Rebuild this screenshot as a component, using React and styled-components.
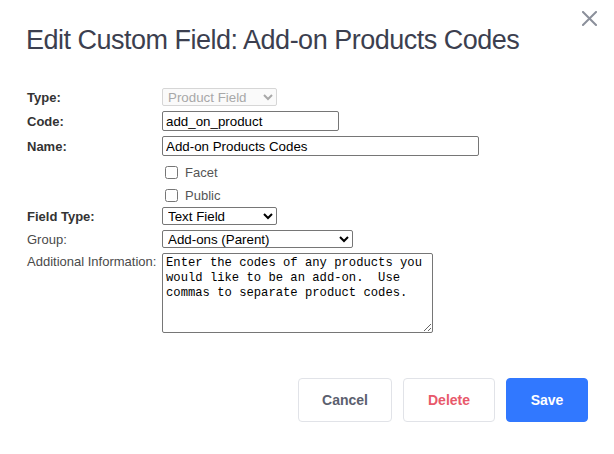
import styled, {createGlobalStyle} from "styled-components";

const GlobalStyle = createGlobalStyle`
  html, body {
    margin: 0;
    padding: 0;
    background: #ffffff;
  }
  body {
    font-family: "Liberation Sans", Arial, sans-serif;
  }
`;

const Modal = styled.div`
  width: 614px;
  height: 454px;
  box-sizing: border-box;
  padding: 0 26px 0 25px;
  background: #ffffff;
  display: flex;
  flex-direction: column;
`;

const Header = styled.div`
  display: flex;
  justify-content: space-between;
  align-items: flex-start;
  padding-top: 10px;
`;

const Title = styled.h2`
  margin: 14px 0 0 1px;
  font-family: "Liberation Sans", Arial, sans-serif;
  font-weight: 400;
  font-size: 27px;
  line-height: 32px;
  letter-spacing: -0.5px;
  color: #3c3f4f;
`;

const CloseButton = styled.button`
  border: none;
  background: transparent;
  padding: 0;
  margin-right: -10px;
  width: 17px;
  height: 17px;
  cursor: pointer;
  display: flex;
  align-items: center;
  justify-content: center;
`;

const Form = styled.form`
  display: grid;
  grid-template-columns: 135px auto;
  row-gap: 5px;
  align-items: center;
  margin: 32px 0 0 2px;
`;

const Label = styled.label`
  font-size: 13px;
  font-weight: ${(p) => (p.$bold ? 700 : 400)};
  color: ${(p) => (p.$bold ? "#333333" : "#4a4a4a")};
  align-self: ${(p) => (p.$top ? "start" : "center")};
  padding-top: ${(p) => (p.$top ? "1px" : "0")};
  white-space: nowrap;
`;

const Field = styled.div`
  display: flex;
  align-items: center;
`;

const TextInput = styled.input`
  box-sizing: border-box;
  width: ${(p) => p.$width}px;
  height: 20px;
  padding: 0 3px;
  border: 1px solid #767676;
  border-radius: 2px;
  font-family: "Liberation Sans", Arial, sans-serif;
  font-size: 13.33px;
  color: #000000;
  outline: none;
`;

const Select = styled.select`
  box-sizing: border-box;
  width: ${(p) => p.$width}px;
  height: 18px;
  padding: 0 0 0 1px;
  border: 1px solid ${(p) => (p.disabled ? "#d6d6d6" : "#767676")};
  border-radius: 2px;
  background: ${(p) => (p.disabled ? "#fafafa" : "#ffffff")};
  font-family: "Liberation Sans", Arial, sans-serif;
  font-size: 13.33px;
  color: ${(p) => (p.disabled ? "#a8a8a8" : "#000000")};
  opacity: 1;
`;

const CheckRow = styled.label`
  grid-column: 2;
  display: flex;
  align-items: center;
  gap: 7px;
  height: 18px;
  padding-left: 3px;
  margin-top: ${(p) => p.$mt || 0}px;
  margin-bottom: ${(p) => p.$mb || 0}px;
  font-size: 13px;
  color: #555555;
`;

const Checkbox = styled.input`
  margin: 0;
  width: 13px;
  height: 13px;
`;

const TextArea = styled.textarea`
  box-sizing: border-box;
  width: 271px;
  height: 80px;
  padding: 2px 3px;
  border: 1px solid #767676;
  border-radius: 2px;
  font-family: "Liberation Mono", "DejaVu Sans Mono", monospace;
  font-size: 12.2px;
  line-height: 15px;
  color: #000000;
  resize: both;
  outline: none;
`;

const Footer = styled.div`
  display: flex;
  justify-content: flex-end;
  gap: 11px;
  margin-top: 45px;
`;

const Button = styled.button`
  box-sizing: border-box;
  height: 44px;
  width: ${(p) => p.$width}px;
  border-radius: 4px;
  border: 1px solid ${(p) => (p.$primary ? "#3178ff" : "#e1e3e8")};
  background: ${(p) => (p.$primary ? "#3178ff" : "#ffffff")};
  color: ${(p) => p.$color};
  font-family: "Liberation Sans", Arial, sans-serif;
  font-weight: 700;
  font-size: 14px;
  cursor: pointer;
`;

export default function App() {
    return (
        <>
            <GlobalStyle/>
            <Modal>
                <Header>
                    <Title>Edit Custom Field: Add-on Products Codes</Title>
                    <CloseButton type='button' aria-label='Close'>
                        <svg width='15' height='15' viewBox='0 0 15 15'>
                            <path d='M1 1L14 14M14 1L1 14' stroke='#8b909b' strokeWidth='2' strokeLinecap='square'/>
                        </svg>
                    </CloseButton>
                </Header>

                <Form onSubmit={(e) => e.preventDefault()}>
                    <Label $bold>Type:</Label>
                    <Field>
                        <Select $width={115} disabled defaultValue='product'>
                            <option value='product'>Product Field</option>
                        </Select>
                    </Field>

                    <Label $bold>Code:</Label>
                    <Field>
                        <TextInput $width={177} type='text' defaultValue='add_on_product'/>
                    </Field>

                    <Label $bold>Name:</Label>
                    <Field>
                        <TextInput $width={317} type='text' defaultValue='Add-on Products Codes'/>
                    </Field>

                    <CheckRow $mt={2}>
                        <Checkbox type='checkbox'/> Facet
                    </CheckRow>
                    <CheckRow $mb={-2}>
                        <Checkbox type='checkbox'/> Public
                    </CheckRow>

                    <Label $bold>Field Type:</Label>
                    <Field>
                        <Select $width={115} defaultValue='text'>
                            <option value='text'>Text Field</option>
                        </Select>
                    </Field>

                    <Label>Group:</Label>
                    <Field>
                        <Select $width={191} defaultValue='addons'>
                            <option value='addons'>Add-ons (Parent)</option>
                        </Select>
                    </Field>

                    <Label $top>Additional Information:</Label>
                    <Field>
                        <TextArea
                            defaultValue={'Enter the codes of any products you would like to be an add-on.  Use commas to separate product codes.'}/>
                    </Field>
                </Form>

                <Footer>
                    <Button type='button' $width={94} $color='#5b606e'>Cancel</Button>
                    <Button type='button' $width={92} $color='#e8596b'>Delete</Button>
                    <Button type='submit' $width={82} $primary $color='#ffffff'>Save</Button>
                </Footer>
            </Modal>
        </>
    );
}
